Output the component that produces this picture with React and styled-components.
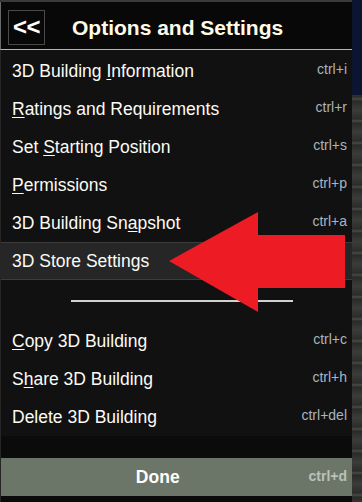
import React from 'react'
import styled, { createGlobalStyle } from 'styled-components'

const GlobalStyle = createGlobalStyle`
  html, body {
    margin: 0;
    padding: 0;
    height: 502px;
    overflow: hidden;
    background: #0b0b0b;
  }
  * {
    box-sizing: border-box;
  }
`

const topItems = [
  { label: ['3D Building ', 'I', 'nformation'], key: 'ctrl+i' },
  { label: ['', 'R', 'atings and Requirements'], key: 'ctrl+r' },
  { label: ['Set ', 'S', 'tarting Position'], key: 'ctrl+s' },
  { label: ['', 'P', 'ermissions'], key: 'ctrl+p' },
  { label: ['3D Building Sn', 'a', 'pshot'], key: 'ctrl+a' },
  { label: ['3D Store Settings'], key: '', active: true },
]

const bottomItems = [
  { label: ['', 'C', 'opy 3D Building'], key: 'ctrl+c' },
  { label: ['S', 'h', 'are 3D Building'], key: 'ctrl+h' },
  { label: ['Delete 3D Building'], key: 'ctrl+del' },
]

function Item({ label, shortcut, active }) {
  const [before, mark, after] = label
  return (
    <Row $active={active}>
      <Label>
        {before}
        {mark && <u>{mark}</u>}
        {after}
      </Label>
      <Shortcut>{shortcut}</Shortcut>
    </Row>
  )
}

export default function App() {
  return (
    <>
      <GlobalStyle />
      <Page>
        <Panel>
          <Header>
            <BackButton>&lt;&lt;</BackButton>
            <Title>Options and Settings</Title>
          </Header>
          <List>
            {topItems.map((it, i) => (
              <Item key={i} label={it.label} shortcut={it.key} active={it.active} />
            ))}
            <Divider>
              <Line />
            </Divider>
            {bottomItems.map((it, i) => (
              <Item key={i} label={it.label} shortcut={it.key} />
            ))}
          </List>
          <Footer>
            <DoneBar>
              <DoneLabel>Done</DoneLabel>
              <DoneKey>ctrl+d</DoneKey>
            </DoneBar>
          </Footer>
          <Arrow viewBox="0 0 185 108" width="185" height="108">
            <polygon
              points="4,53 93,4 93,27 180,27 180,80 93,80 93,104"
              fill="#ed1c24"
            />
          </Arrow>
        </Panel>
        <Side />
      </Page>
    </>
  )
}

const Page = styled.div`
  display: flex;
  width: 362px;
  height: 502px;
  font-family: 'Liberation Sans', Arial, sans-serif;
`

const Panel = styled.div`
  position: relative;
  display: flex;
  flex-direction: column;
  width: 352px;
  height: 502px;
  background: #111111;
  border-left: 1px solid #262626;
  border-top: 2px solid #3a3a3a;
`

const Side = styled.div`
  flex: 1;
  background:
    linear-gradient(#0b1530 0, #0b1530 95px, transparent 95px),
    repeating-linear-gradient(
      #3c3c3a 0,
      #2c2c2a 9px,
      #4a4a47 11px,
      #2a2a28 13px,
      #3c3c3a 22px
    );
`

const Header = styled.div`
  display: flex;
  align-items: flex-start;
  gap: 27px;
  height: 48px;
  padding: 8px 0 0 7px;
  background: #080808;
  border-left: 1px solid #6a6a6a;
  margin-left: -1px;
  border-bottom: 1px solid #b4b4b4;
`

const BackButton = styled.div`
  display: flex;
  align-items: center;
  justify-content: center;
  width: 37px;
  height: 35px;
  padding-bottom: 2px;
  border: 1px solid #4a4a4a;
  color: #ffffff;
  font-size: 24px;
  font-weight: bold;
  letter-spacing: -0.5px;
`

const Title = styled.div`
  padding-top: 6px;
  color: #fffbe6;
  font-size: 21px;
  font-weight: bold;
`

const List = styled.div`
  display: flex;
  flex-direction: column;
  padding-top: 2px;
`

const Row = styled.div`
  display: flex;
  align-items: center;
  justify-content: space-between;
  height: 38px;
  padding: 0 5px 0 11px;
  background: ${({ $active }) => ($active ? '#262626' : 'transparent')};
  border-top: 1px solid ${({ $active }) => ($active ? '#3c3c3c' : 'transparent')};
  border-bottom: 1px solid ${({ $active }) => ($active ? '#3c3c3c' : 'transparent')};
`

const Label = styled.span`
  color: #fbfbf6;
  font-size: 17.5px;
  white-space: nowrap;

  u {
    text-decoration-thickness: 1px;
    text-underline-offset: 2px;
  }
`

const Shortcut = styled.span`
  padding-bottom: 5px;
  color: #a9b4bf;
  font-size: 14px;
`

const Divider = styled.div`
  display: flex;
  align-items: center;
  height: 42px;
  padding-left: 70px;
`

const Line = styled.div`
  width: 222px;
  height: 2px;
  background: #d2d2d2;
`

const Footer = styled.div`
  flex: 1;
  padding-top: 22px;
  background: #0b0b0b;
`

const DoneBar = styled.div`
  display: flex;
  align-items: center;
  height: 38px;
  padding: 0 5px 0 6px;
  background: #6b7568;
`

const DoneLabel = styled.span`
  flex: 1;
  text-align: center;
  color: #ffffff;
  font-size: 17.5px;
  font-weight: bold;
`

const DoneKey = styled.span`
  padding-bottom: 3px;
  color: #b9c1b8;
  font-size: 14px;
  font-weight: bold;
`

const Arrow = styled.svg`
  position: absolute;
  left: 164px;
  top: 206px;
  pointer-events: none;
`
